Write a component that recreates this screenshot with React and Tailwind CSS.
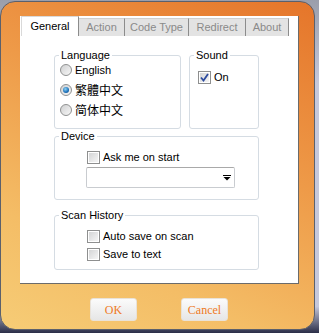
const ui = { fontFamily: '"Liberation Sans", Arial, sans-serif' }

function Radio({ checked }) {
  return (
    <span className="w-[12px] h-[12px] rounded-full border border-[#8f9191] bg-[linear-gradient(135deg,#cfd0d1,#f7f7f7)] flex items-center justify-center shrink-0">
      {checked && (
        <span className="w-[6px] h-[6px] rounded-full bg-[radial-gradient(circle_at_40%_35%,#8fd3f5,#1a6fb8_60%,#0d3f78)]" />
      )}
    </span>
  )
}

function Check({ checked }) {
  return (
    <span className="w-[13px] h-[13px] border border-[#8e8f8f] bg-white p-px flex shrink-0">
      <span className="flex-1 bg-[linear-gradient(135deg,#d4d5d6,#f5f5f5)] flex items-center justify-center">
        {checked && (
          <svg width="9" height="9" viewBox="0 0 9 9">
            <path d="M1 4.5 L3.5 7.5 L8 1" fill="none" stroke="#2b4a9e" strokeWidth="1.8" />
          </svg>
        )}
      </span>
    </span>
  )
}

function Group({ title, className = '', children }) {
  return (
    <fieldset className={'border border-[#d5dce3] rounded-[3px] ' + className}>
      <legend className="ml-[4px] px-[2px] leading-[13px]">{title}</legend>
      {children}
    </fieldset>
  )
}

const tabs = [
  { label: 'General', w: 'w-[58px]' },
  { label: 'Action', w: 'w-[46px]' },
  { label: 'Code Type', w: 'w-[64px]' },
  { label: 'Redirect', w: 'w-[57px]' },
  { label: 'About', w: 'w-[43px]' },
]

export default function App() {
  return (
    <div
      className="w-[319px] h-[333px] overflow-hidden bg-[linear-gradient(180deg,#9a9eab_0%,#c6c8db_25%,#c6c8db_92%,#2b2e48_100%)] text-[11px] text-black"
      style={ui}
    >
      <div className="w-[315px] h-[329px] mt-px border border-[#5b606c] rounded-[15px] bg-[linear-gradient(205deg,#e5752a_0%,#ee9a48_40%,#f4bd66_75%,#f6cc76_100%)] pl-[19px] pt-[14px]">
        <div className="w-[279px] h-[268px] bg-white border-r border-b border-[#6b6b6b] flex flex-col">
          <div className="flex h-[20px] pl-px items-end">
            {tabs.map((t, i) => (
              <div
                key={t.label}
                className={
                  t.w +
                  ' flex items-center justify-center border-r border-[#8c8c8c] ' +
                  (i === 0
                    ? 'h-[20px] bg-white border-l border-t border-l-[#d9d9d9] border-t-[#d9d9d9]'
                    : 'h-[18px] bg-[#e3e3e3] text-[#8a8a8a] border-t border-t-[#cfcfcf]')
                }
              >
                {t.label}
              </div>
            ))}
          </div>

          <div className="pl-[34px] pr-[39px] pt-[13px] flex flex-col">
            <div className="flex gap-[8px]">
              <Group title="Language" className="w-[127px] pb-[8px]">
                <div className="-mt-[2px] pl-[5px] flex flex-col">
                  <label className="h-[20px] flex items-center gap-[3px]">
                    <Radio />
                    <span>English</span>
                  </label>
                  <label className="h-[20px] flex items-center gap-[3px]">
                    <Radio checked />
                    <span className="text-[12px]" style={{ fontFamily: '"Noto Sans CJK TC", sans-serif' }}>繁體中文</span>
                  </label>
                  <label className="h-[20px] flex items-center gap-[3px]">
                    <Radio />
                    <span className="text-[12px]" style={{ fontFamily: '"Noto Sans CJK SC", sans-serif' }}>简体中文</span>
                  </label>
                </div>
              </Group>
              <Group title="Sound" className="flex-1">
                <label className="mt-[5px] pl-[8px] h-[20px] flex items-center gap-[3px]">
                  <Check checked />
                  <span>On</span>
                </label>
              </Group>
            </div>

            <Group title="Device" className="mt-px pb-[11px]">
              <div className="pl-[31px]">
                <label className="mt-[4px] ml-px h-[20px] flex items-center gap-[3px]">
                  <Check />
                  <span>Ask me on start</span>
                </label>
                <div className="w-[149px] h-[21px] border border-[#c9ccd0] border-t-[#a9a9a9] rounded-[2px] flex items-center justify-end pr-[3px]">
                  <svg width="8" height="6" viewBox="0 0 8 6">
                    <rect x="0" y="0" width="8" height="1" fill="#000" />
                    <path d="M0.5 2 H7.5 L4 5.5 Z" fill="#000" />
                  </svg>
                </div>
              </div>
            </Group>

            <Group title="Scan History" className="mt-[9px] pb-[6px]">
              <div className="pt-[5px] pl-[32px] flex flex-col">
                <label className="h-[18px] flex items-center gap-[3px]">
                  <Check />
                  <span>Auto save on scan</span>
                </label>
                <label className="h-[18px] flex items-center gap-[3px]">
                  <Check />
                  <span>Save to text</span>
                </label>
              </div>
            </Group>
          </div>
        </div>

        <div className="flex mt-[14px] pl-[70px] gap-[44px]">
          {['OK', 'Cancel'].map((b) => (
            <button
              key={b}
              className="w-[47px] h-[23px] rounded-[3px] border border-[#e9e2d8] bg-[linear-gradient(180deg,#fbfbfb,#e6e6e6)] text-[#ef7a24] text-[12px]"
              style={{ fontFamily: '"Liberation Serif", serif' }}
            >
              {b}
            </button>
          ))}
        </div>
      </div>
    </div>
  )
}
